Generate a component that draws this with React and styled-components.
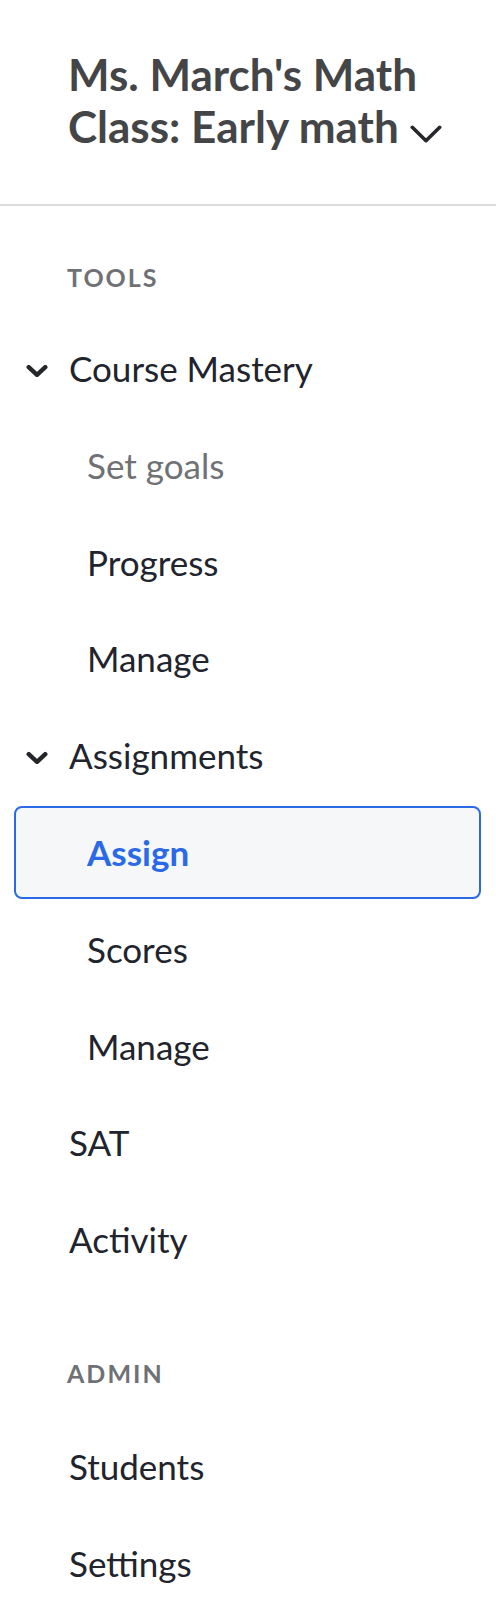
import React from "react";
import styled, { createGlobalStyle } from "styled-components";

const GlobalStyle = createGlobalStyle`
  body {
    margin: 0;
    background: #ffffff;
    font-family: Lato, "Noto Sans", sans-serif;
  }
`;

const Sidebar = styled.aside`
  width: 496px;
  min-height: 1608px;
  background: #ffffff;
`;

const Header = styled.header`
  padding: 48px 12px 52px 68px;
  border-bottom: 2px solid #dadbdd;
`;

const Title = styled.h1`
  margin: 0;
  font-size: 44px;
  line-height: 52px;
  font-weight: 700;
  color: #444547;
  svg {
    margin-left: 11px;
    vertical-align: baseline;
  }
`;

const Nav = styled.nav`
  display: flex;
  flex-direction: column;
  padding: 0 15px 0 14px;
`;

const SectionLabel = styled.div`
  padding: ${(p) => (p.$first ? "56px" : "68px")} 0 0 53px;
  height: ${(p) => (p.$first ? "60px" : "62px")};
  font-size: 25px;
  font-weight: 700;
  letter-spacing: 2px;
  color: #6f7175;
`;

const Item = styled.a`
  display: flex;
  align-items: center;
  box-sizing: border-box;
  height: 93px;
  margin-bottom: 3.8px;
  padding-left: ${(p) => (p.$sub ? "71px" : "53px")};
  border: 2px solid ${(p) => (p.$active ? "#2b6ae6" : "transparent")};
  border-radius: 8px;
  background: ${(p) => (p.$active ? "#f6f7f9" : "transparent")};
  font-size: 35px;
  line-height: 43px;
  font-weight: ${(p) => (p.$active ? 700 : 400)};
  color: ${(p) => (p.$active ? "#2b6ae6" : p.$muted ? "#6f7175" : "#21242c")};
  text-decoration: none;
  position: relative;
`;

const Caret = styled.span`
  position: absolute;
  left: 10px;
  top: 50%;
  margin-top: 2px;
  transform: translateY(-50%);
  display: flex;
`;

const Chevron = ({ w, h, sw }) => (
  <svg width={w} height={h} viewBox={`0 0 ${w} ${h}`} fill="none">
    <path
      d={`M${sw / 2 + 0.5} ${sw / 2 + 0.5} L${w / 2} ${h - sw / 2 - 0.5} L${w - sw / 2 - 0.5} ${sw / 2 + 0.5}`}
      stroke="#25272b"
      strokeWidth={sw}
      strokeLinecap="round"
      strokeLinejoin="round"
    />
  </svg>
);

const NavItem = ({ children, caret, ...rest }) => (
  <Item href="#" {...rest}>
    {caret && (
      <Caret>
        <Chevron w={22} h={13} sw={4.4} />
      </Caret>
    )}
    {children}
  </Item>
);

export default function App() {
  return (
    <>
      <GlobalStyle />
      <Sidebar>
        <Header>
          <Title>
            Ms. March's Math Class: Early math
            <Chevron w={32} h={18} sw={3.6} />
          </Title>
        </Header>
        <Nav>
          <SectionLabel $first>TOOLS</SectionLabel>
          <NavItem caret>Course Mastery</NavItem>
          <NavItem $sub $muted>Set goals</NavItem>
          <NavItem $sub>Progress</NavItem>
          <NavItem $sub>Manage</NavItem>
          <NavItem caret>Assignments</NavItem>
          <NavItem $sub $active>Assign</NavItem>
          <NavItem $sub>Scores</NavItem>
          <NavItem $sub>Manage</NavItem>
          <NavItem>SAT</NavItem>
          <NavItem>Activity</NavItem>
          <SectionLabel>ADMIN</SectionLabel>
          <NavItem>Students</NavItem>
          <NavItem>Settings</NavItem>
        </Nav>
      </Sidebar>
    </>
  );
}
